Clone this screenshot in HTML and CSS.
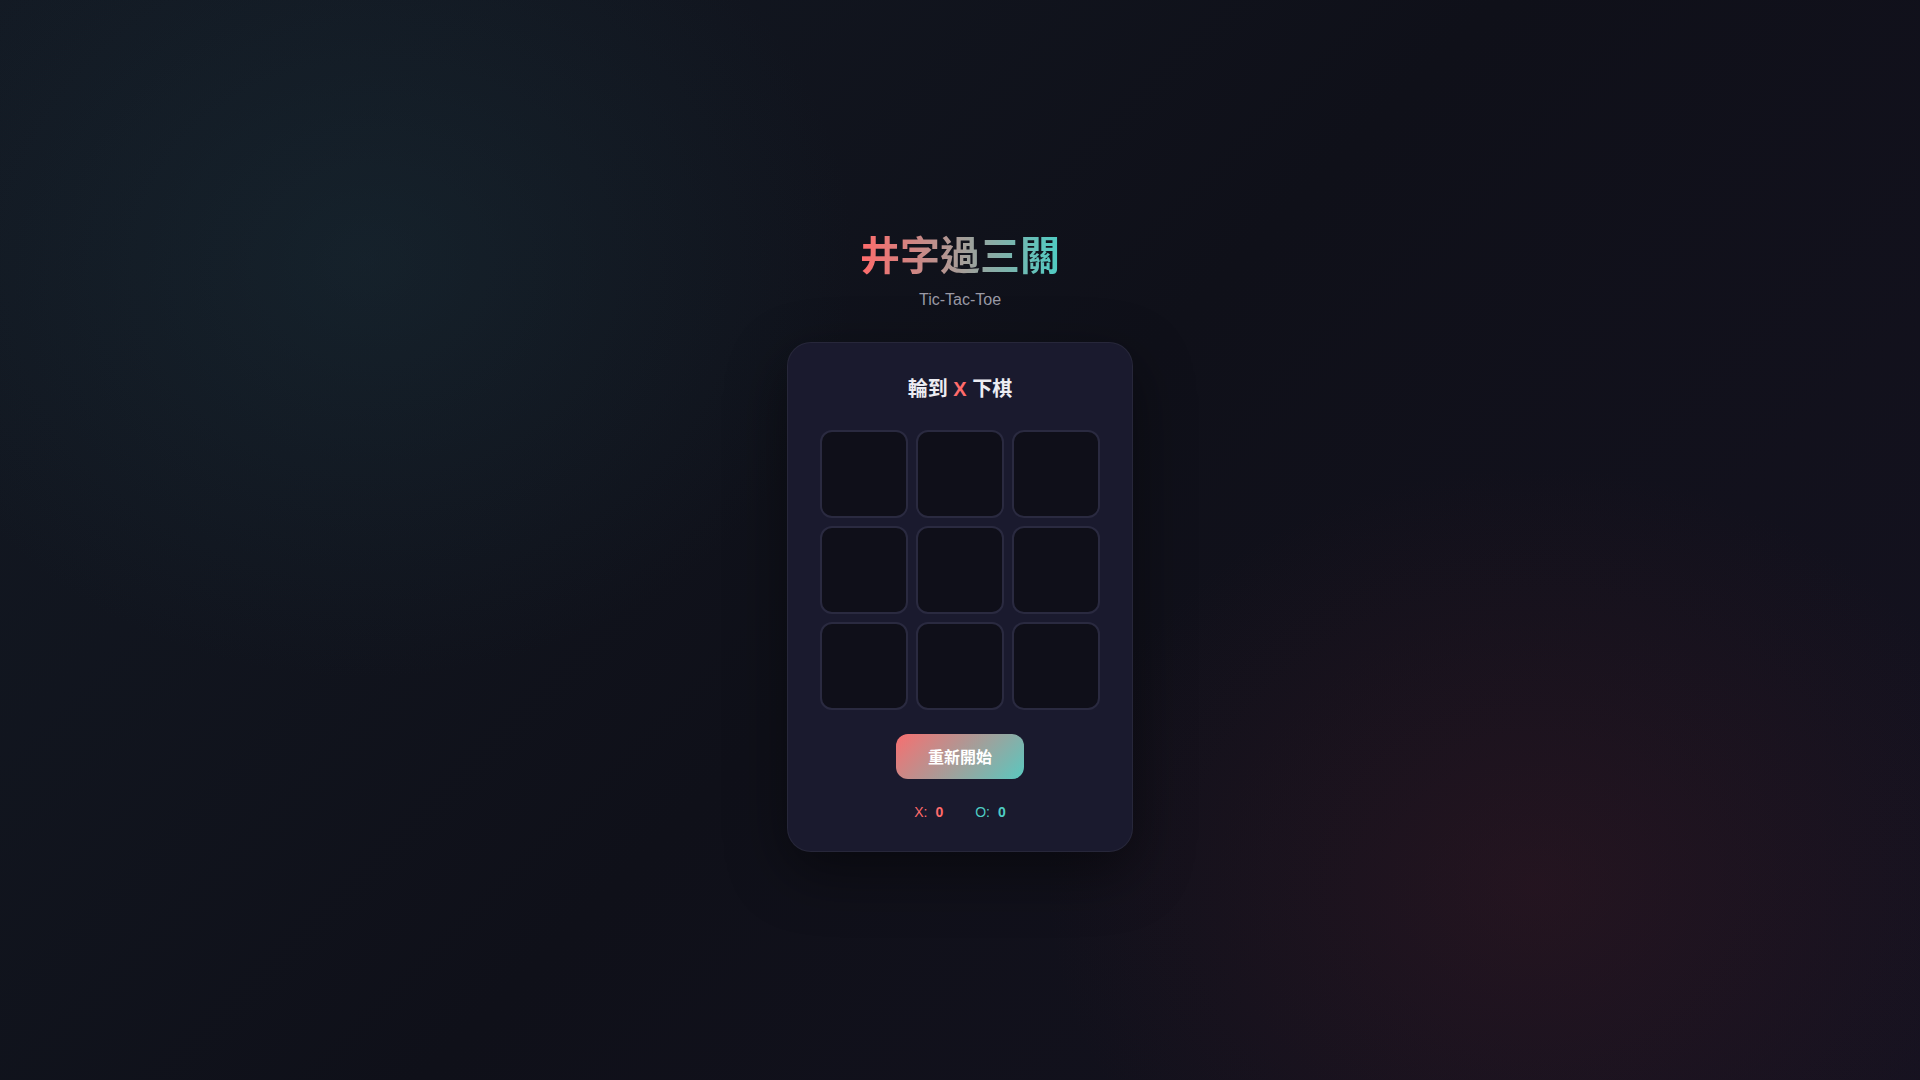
FILE: index.html
```html
<!DOCTYPE html>
<html lang="zh-Hant">
<head>
<meta charset="UTF-8">
<title>井字過三關</title>
<link rel="stylesheet" href="styles.css">
</head>
<body>
<main class="app">
  <h1 class="title">井字過三關</h1>
  <p class="subtitle">Tic-Tac-Toe</p>
  <section class="card">
    <div class="status">輪到 <span class="x">X</span> 下棋</div>
    <div class="board">
      <button class="cell"></button>
      <button class="cell"></button>
      <button class="cell"></button>
      <button class="cell"></button>
      <button class="cell"></button>
      <button class="cell"></button>
      <button class="cell"></button>
      <button class="cell"></button>
      <button class="cell"></button>
    </div>
    <button class="restart">重新開始</button>
    <div class="scores">
      <div class="score score-x"><span>X:</span><strong>0</strong></div>
      <div class="score score-o"><span>O:</span><strong>0</strong></div>
    </div>
  </section>
</main>
</body>
</html>
```
FILE: styles.css
```css
* { box-sizing: border-box; }
html, body { margin: 0; height: 100%; }
body {
  font-family: "Liberation Sans", "Noto Sans CJK TC", sans-serif;
  color: #eaeaf0;
  background:
    radial-gradient(ellipse 700px 600px at 19% 24%, rgba(30, 60, 70, 0.3), transparent 70%),
    radial-gradient(ellipse 700px 600px at 80% 82%, rgba(90, 30, 40, 0.24), transparent 70%),
    linear-gradient(135deg, #131a24 0%, #0f1019 50%, #151220 100%);
  min-height: 100vh;
}
.app {
  min-height: 100vh;
  display: flex;
  flex-direction: column;
  align-items: center;
  justify-content: center;
}
.title {
  margin: 0 0 11px;
  font-family: "Noto Sans CJK TC", "Liberation Sans", sans-serif;
  font-size: 40px;
  font-weight: 700;
  line-height: 48px;
  background: linear-gradient(90deg, #ff6b6b, #4ecdc4);
  -webkit-background-clip: text;
  background-clip: text;
  color: transparent;
}
.subtitle {
  margin: 0 0 30px;
  font-size: 16px;
  line-height: 24px;
  color: #9a9aa6;
}
.card {
  width: 346px;
  padding: 32px 32px 29px;
  background: #1a1a2e;
  border: 1px solid rgba(255, 255, 255, 0.06);
  border-radius: 24px;
  box-shadow: 0 20px 60px rgba(0, 0, 0, 0.45);
  display: flex;
  flex-direction: column;
  align-items: center;
}
.status {
  font-family: "Liberation Sans", "Noto Sans CJK TC", sans-serif;
  font-size: 20px;
  line-height: 28px;
  font-weight: 700;
  color: #ececf2;
  margin-bottom: 27px;
}
.status .x { color: #ff6b6b; }
.board {
  display: grid;
  grid-template-columns: repeat(3, 88px);
  grid-template-rows: repeat(3, 88px);
  gap: 8px;
}
.cell {
  width: 88px;
  height: 88px;
  background: #0f0f19;
  border: 2px solid #2a2a40;
  border-radius: 12px;
  padding: 0;
  cursor: pointer;
}
.restart {
  margin-top: 24px;
  height: 45px;
  padding: 0 32px;
  border: none;
  border-radius: 12px;
  background: linear-gradient(135deg, #f76f70, #5ac8bf);
  color: #fff;
  font-family: "Noto Sans CJK TC", "Liberation Sans", sans-serif;
  font-size: 16px;
  font-weight: 700;
  cursor: pointer;
}
.scores {
  margin-top: 23px;
  display: flex;
  gap: 32px;
  font-size: 14px;
  line-height: 20px;
}
.score { display: flex; gap: 8px; }
.score strong { font-weight: 700; }
.score-x { color: #ff6b6b; }
.score-o { color: #4ecdc4; }
```
